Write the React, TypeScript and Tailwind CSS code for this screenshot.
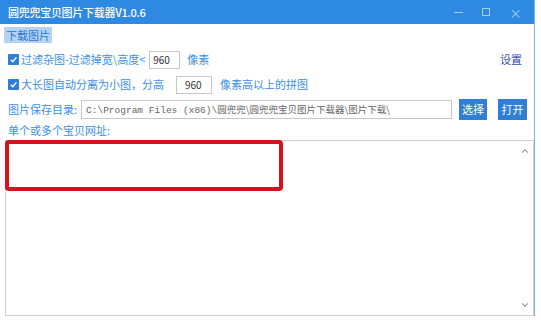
import { ChevronUp, ChevronDown } from 'lucide-react';

const font = { fontFamily: '"Noto Sans CJK SC", "Noto Sans", sans-serif' };

function Check() {
  return (
    <span className="w-[11px] h-[11px] bg-[#2f7fd6] rounded-[1px] flex items-center justify-center shrink-0">
      <svg width="9" height="9" viewBox="0 0 10 10">
        <path d="M2 5.2 L4.2 7.4 L8.2 2.6" stroke="white" strokeWidth="1.6" fill="none" />
      </svg>
    </span>
  );
}

export default function App() {
  return (
    <div className="w-[541px] h-[327px] bg-white overflow-hidden text-[11px] text-[#3b8fe4]" style={font}>
      <div className="w-[535px] h-[316px] flex flex-col border-r border-[#7fb4e8]">
        {/* title bar */}
        <div className="h-[24px] bg-[#2d89e2] flex items-center pl-[8px] pr-[12px] text-white">
          <span className="text-[11px] font-medium tracking-tight">圆兜兜宝贝图片下载器V1.0.6</span>
          <div className="ml-auto flex items-center gap-[19px] text-[#a9cff4]">
            <span className="w-[9px] h-[1px] bg-[#a9cff4]"></span>
            <span className="w-[8px] h-[8px] border border-[#a9cff4]"></span>
            <span className="text-[13px] leading-none">×</span>
          </div>
        </div>
        {/* tab */}
        <div className="pl-[4px] pt-[3px]">
          <span className="inline-block bg-[#b3d3f1] text-[#2a78d2] px-[2px] h-[16px] leading-[16px]">下载图片</span>
        </div>
        {/* row 1 */}
        <div className="flex items-center pl-[8px] pr-[12px] mt-[7px] h-[18px]">
          <Check />
          <span className="ml-[2px]">过滤杂图-过滤掉宽\高度&lt;</span>
          <span className="ml-[4px] w-[31px] h-[18px] border border-[#c8c8c8] text-[#333] text-[10px] leading-[16px] pl-[3px]">960</span>
          <span className="ml-[7px]">像素</span>
          <span className="ml-auto text-[#3b4fa8]">设置</span>
        </div>
        {/* row 2 */}
        <div className="flex items-center pl-[8px] mt-[7px] h-[18px]">
          <Check />
          <span className="ml-[2px]">大长图自动分离为小图，分高</span>
          <span className="ml-[12px] w-[36px] h-[18px] border border-[#c8c8c8] text-[#333] text-[10px] leading-[16px] pl-[8px]">960</span>
          <span className="ml-[8px]">像素高以上的拼图</span>
        </div>
        {/* row 3 */}
        <div className="flex items-center pl-[8px] mt-[5px] h-[22px]">
          <span>图片保存目录:</span>
          <span className="ml-[4px] w-[371px] h-[19px] border border-[#c8c8c8] text-[#666] text-[9.5px] leading-[17px] pl-[4px] whitespace-nowrap overflow-hidden">
            <span style={{ fontFamily: '"Liberation Mono", "Noto Sans CJK SC", monospace' }}>C:\Program Files (x86)\</span>圆兜兜\圆兜兜宝贝图片下载器\图片下载\
          </span>
          <span className="ml-[7px] w-[28px] h-[21px] bg-[#2f7fd6] text-white flex items-center justify-center">选择</span>
          <span className="ml-[11px] w-[29px] h-[21px] bg-[#2f7fd6] text-white flex items-center justify-center">打开</span>
        </div>
        {/* row 4 */}
        <div className="pl-[8px] mt-[1px] h-[16px] leading-[16px]">单个或多个宝贝网址:</div>
        {/* textarea */}
        <div className="relative flex-1 ml-[5px] mt-[2px] border border-[#d0d0d0] flex">
          <div className="flex-1"></div>
          <div className="w-[16px] flex flex-col items-center justify-between py-[5px] text-[#777]">
            <ChevronUp size={10} strokeWidth={2.5} />
            <ChevronDown size={10} strokeWidth={2.5} />
          </div>
          <div className="absolute left-[-1px] top-[-1px] w-[278px] h-[51px] border-[4px] border-[#d4121b] rounded-[4px]"></div>
        </div>
      </div>
    </div>
  );
}
